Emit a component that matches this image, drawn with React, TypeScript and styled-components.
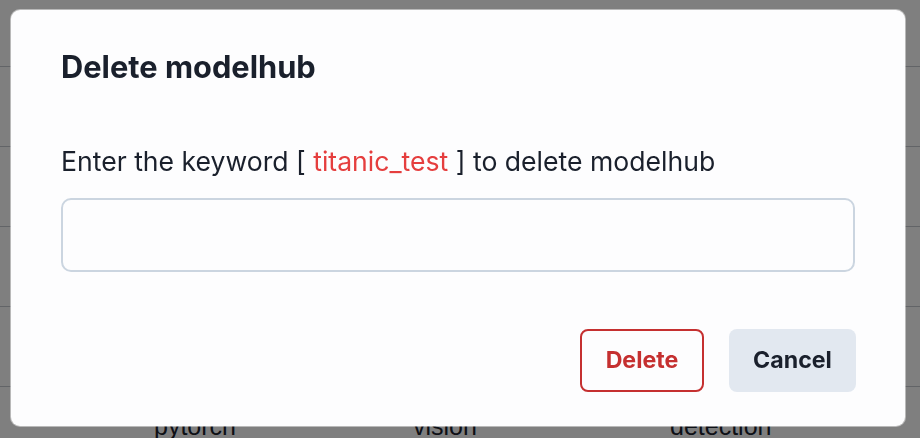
import React from 'react'
import styled, { createGlobalStyle } from 'styled-components'

const GlobalStyle = createGlobalStyle`
  html, body {
    margin: 0;
    padding: 0;
    background: #ffffff;
    overflow: hidden;
  }
  body {
    width: 920px;
    height: 438px;
  }
`

const rows = [
  ['', '', ''],
  ['tensorflow', 'nlp', 'classification'],
  ['sklearn', 'tabular', 'regression'],
  ['xgboost', 'tabular', 'classification'],
  ['keras', 'audio', 'speech'],
  ['pytorch', 'vision', 'detection'],
]

function App() {
  return (
    <>
      <GlobalStyle />
      <Page>
        <Table>
          {rows.map((row, index) => (
            <Row key={index}>
              {row.map((cell, i) => (
                <Cell key={i}>{cell}</Cell>
              ))}
            </Row>
          ))}
        </Table>
      </Page>
      <Overlay>
        <Dialog>
          <Title>Delete modelhub</Title>
          <Message>
            Enter the keyword [ <Keyword>titanic_test</Keyword> ] to delete modelhub
          </Message>
          <Input type="text" />
          <Footer>
            <Button $variant="danger">Delete</Button>
            <Button $variant="plain">Cancel</Button>
          </Footer>
        </Dialog>
      </Overlay>
    </>
  )
}

const Page = styled.div`
  width: 920px;
  height: 438px;
  overflow: hidden;
`

const Table = styled.div`
  display: flex;
  flex-direction: column;
  margin-top: -13px;
`

const Row = styled.div`
  display: grid;
  grid-template-columns: 259px 257px 1fr;
  align-items: center;
  padding-left: 154px;
  height: 80px;
  border-bottom: 1px solid #c4c8cf;
  box-sizing: border-box;
`

const Cell = styled.div`
  font-family: "Liberation Sans", Arial, sans-serif;
  font-size: 25px;
  color: #1a202c;
`

const Overlay = styled.div`
  position: fixed;
  inset: 0;
  background: rgba(0, 0, 0, 0.5);
  padding: 10px 0 0 11px;
`

const Dialog = styled.div`
  width: 894px;
  box-sizing: border-box;
  background: #fdfdfe;
  border-radius: 9px;
  padding: 39px 49px 34px 50px;
  box-shadow: 0 0 0 1px rgba(255, 255, 255, 0.45);
  font-family: Inter, "Noto Sans", sans-serif;
  color: #1a202c;
  display: flex;
  flex-direction: column;
`

const Title = styled.h2`
  margin: 0 0 59.5px;
  font-size: 30.8px;
  line-height: 36px;
  font-weight: 700;
  white-space: nowrap;
`

const Message = styled.p`
  margin: 0 0 20.4px;
  font-size: 26.6px;
  line-height: 33px;
  font-weight: 400;
  white-space: nowrap;
`

const Keyword = styled.span`
  color: #e53e3e;
`

const Input = styled.input`
  height: 74px;
  width: 794px;
  box-sizing: border-box;
  border: 2px solid #cbd5e0;
  border-radius: 10px;
  background: transparent;
  outline: none;
  font: inherit;
  font-size: 22px;
  padding: 0 22px;
`

const Footer = styled.div`
  display: flex;
  justify-content: flex-end;
  gap: 25px;
  margin-top: 57px;
`

const Button = styled.button<{ $variant: 'danger' | 'plain' }>`
  height: 63px;
  width: ${(p) => (p.$variant === 'danger' ? '124px' : '127px')};
  padding: 0;
  border-radius: 8px;
  font-family: Inter, "Noto Sans", sans-serif;
  font-size: 23.2px;
  font-weight: 700;
  cursor: pointer;
  box-sizing: border-box;
  border: ${(p) => (p.$variant === 'danger' ? '2px solid #c53030' : 'none')};
  color: ${(p) => (p.$variant === 'danger' ? '#c53030' : '#1a202c')};
  background: ${(p) => (p.$variant === 'danger' ? 'transparent' : '#e2e8f0')};
`

export default App
